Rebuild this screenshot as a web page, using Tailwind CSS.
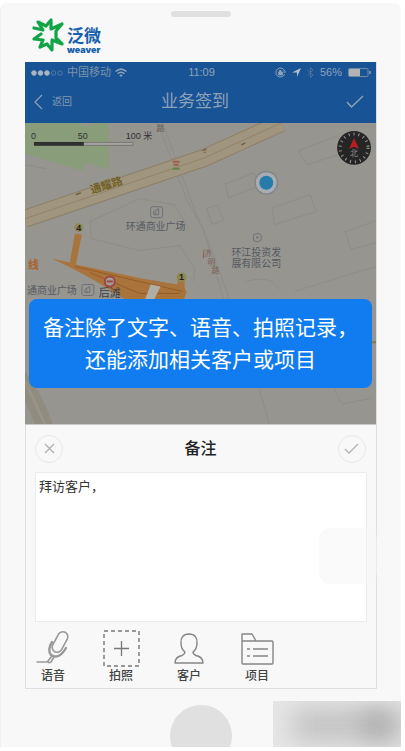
<!DOCTYPE html>
<html lang="zh-CN">
  <head>
    <meta charset="UTF-8" />
    <meta name="viewport" content="width=device-width, initial-scale=1.0" />
    <title>业务签到</title>
    <script src="https://cdn.jsdelivr.net/npm/@tailwindcss/browser@4"></script>
    <style>
      body {
        font-family: "Liberation Sans", "Noto Sans CJK SC", sans-serif;
      }
    </style>
  </head>
  <body class="bg-white pt-[3px] pr-1 pb-1">
    <!-- phone body -->
    <div class="relative overflow-hidden rounded-t-lg border-l border-[#f0f0f0] bg-[#f8f8f8]">
      <div class="mx-auto mt-2 h-[6px] w-15 rounded-full bg-[#e0e0e0]"></div>

      <!-- logo -->
      <div class="flex h-[45px] items-start pl-[30px]">
        <svg class="mt-px h-[34px] w-[34px] shrink-0" viewBox="0 0 34 34" fill="none" stroke="#12a548" stroke-width="3.200" stroke-linejoin="round" stroke-linecap="round">
          <path d="M3 10 12 12 7 4 15 8 20 2V11L31 6 25 13V20L31 26 21 22V32L16 26 9 29 12 22 3 21 10 16" />
        </svg>
        <div class="flex flex-col pt-[11px] pl-[2px] text-[#1760ad]">
          <span class="text-[17px] leading-[18px] font-bold">泛微</span>
          <span class="font-[Inter] text-[9px] leading-[8px] font-black">weaver</span>
        </div>
      </div>

      <!-- screen -->
      <main class="mr-6 ml-6 border-r border-b border-l border-[#dedede]">
        <header class="-ml-px bg-[#185495] text-[#8da2b8]">
          <div class="grid h-[21px] grid-cols-3 items-center pr-1 pl-[6px] text-[11px]">
            <div class="flex items-center gap-1 whitespace-nowrap">
              <svg class="h-2 w-8 shrink-0" viewBox="0 0 32 8" fill="#a9b5c0" stroke="#a9b5c0">
                <circle cx="3" cy="4" r="2.3" /><circle cx="9.500" cy="4" r="2.3" /><circle cx="16" cy="4" r="2.3" />
                <g fill="none" opacity=".4"><circle cx="22.500" cy="4" r="2.200" /><circle cx="29" cy="4" r="2.200" /></g>
              </svg>
              <span class="text-[#7d93aa]">中国移动</span>
              <svg class="h-[10px] w-3 shrink-0" viewBox="0 0 12 10" fill="none" stroke="currentColor" stroke-width="1.600">
                <path d="M.6 3.500Q6-1.200 11.400 3.500M2.600 5.700Q6 2.800 9.400 5.700" /><path d="M4.300 7.200Q6 5.800 7.700 7.200L6 9Z" fill="currentColor" stroke="none" />
              </svg>
            </div>
            <span class="text-center">11:09</span>
            <div class="flex items-center justify-end gap-[6px]">
              <svg class="h-[11px] w-[11px] shrink-0" viewBox="0 0 11 11" fill="none" stroke="currentColor">
                <path d="M9.600 7A4.500 4.500 0 1 1 9.600 4M8 5h3" /><path d="M3.500 5h4v3h-4zM4.200 5V3.500h2V5" fill="currentColor" stroke-width=".7" />
              </svg>
              <svg class="h-[9px] w-[9px] shrink-0" viewBox="0 0 9 9" fill="#b4bfca"><path d="M9 0 5 9V4.500H0Z" /></svg>
              <svg class="h-[11px] w-[7px] shrink-0" viewBox="0 0 7 11" fill="none" stroke="#507299"><path d="M.5 3 6 8 3.500 10.500V.5L6 3 .5 8" /></svg>
              <span>56%</span>
              <svg class="h-[9px] w-6 shrink-0" viewBox="0 0 24 9">
                <rect x=".5" y=".5" width="19.500" height="8" rx="1" fill="none" stroke="#6f8aa6" /><path d="M1 1h11v7H1z" fill="#b0b3b2" /><path d="M22 3v3" stroke="currentColor" stroke-width="1.500" />
              </svg>
            </div>
          </div>
          <div class="grid h-10 grid-cols-3 items-center pr-3 pl-[9px] pb-[3px]">
            <button class="flex items-center gap-[9px] text-[10px] text-[#8198ae]">
              <svg class="h-4 w-[9px]" viewBox="0 0 9 16" fill="none" stroke="#8da2b8" stroke-width="1.200"><path d="M8 1 1 8 8 15" /></svg>
              返回
            </button>
            <h1 class="pr-2 text-center text-[17px] whitespace-nowrap">业务签到</h1>
            <button class="justify-self-end" aria-label="完成">
              <svg class="h-[13px] w-[18px]" viewBox="0 0 18 13" fill="none" stroke="currentColor" stroke-width="1.400"><path d="M1 7 5.500 12 17 1" /></svg>
            </button>
          </div>
        </header>

        <!-- map -->
        <section class="relative -ml-px h-[302px] border-b border-[#c8c8c6] bg-[#969590]">
          <svg class="h-full w-full" viewBox="25 123 352 302" preserveAspectRatio="xMidYMid slice">
            <path d="M25 123H109V170L86 163 83 171 25 154Z" fill="#8a9d7b" />
            <path d="M83 123h13l-13 4z" fill="#969590" />
            <!-- buildings -->
            <g fill="none" stroke="#8e8d89" stroke-width="1">
              <path d="M299 151 338 136 347 152 308 165ZM226 184 255 173 260 186 229 198ZM273 208 311 195 317 212 275 225ZM346 232 377 221M346 232 352 250 377 243M207 209 218 205 224 221 213 225ZM90 222 140 199 175 205 190 230M90 222 92 239 140 251 180 246 195 269 194 282M246 282Q273 275 280 290M295 292 377 267M25 165 47 169M257 380 270 425M335 390l8 15 30-6" />
              <path d="M158 123 188 202 204 230 224 299M163 123 195 210 208 240 230 299" />
            </g>
            <!-- main road -->
            <path d="M25 219 205 158 282 123" fill="none" stroke="#8f7f68" stroke-width="18" />
            <path d="M25 219 205 158 282 123" fill="none" stroke="#a0957f" stroke-width="16" />
            <path d="M25 219 205 158 282 123" fill="none" stroke="#94836a" stroke-width="1" />
            <path d="m76 195 5-2M203 151l4-2M242 145l4-2" fill="none" stroke="#6f6348" stroke-width="1.500" />
            <path d="M25 372Q42 394 53 425H35L25 402Z" fill="#908c80" />
            <path d="M25 382 45 425" fill="none" stroke="#989488" stroke-width="3" />
            <!-- metro line -->
            <g fill="#a9733c">
              <path d="M52 259 70 263 75 234 82 235 76 265 142 279 178 285V276h7v12l2 5-4 10H130Q95 279 52 259Z" />
            </g>
            <path d="M75 267 183 292M90 273l50 21h40" fill="none" stroke="#965b26" stroke-width="1" />
            <path d="m151 285 10 2-7 14h-9z" fill="#b1aea6" />
            <g font-weight="bold" font-size="9" text-anchor="middle" fill="#222">
              <circle cx="79" cy="228" r="4.500" fill="#918952" /><text x="79" y="231">4</text>
              <circle cx="182" cy="278" r="5" fill="#918952" /><text x="182" y="281">1</text>
            </g>
            <circle cx="110" cy="282" r="5" fill="#a79d98" stroke="#9b4646" stroke-width="2" />
            <path d="M107 282h6" stroke="#9b4646" stroke-width="2" />
            <path d="M173 162h7M174 165h5" stroke="#a15e50" stroke-width="2" /><path d="M173 169h7" stroke="#66834b" stroke-width="2" />
            <path d="M204 153l3-1M204 251v8" stroke="#94635a" stroke-width="1" />
            <path d="M373 343h4" stroke="#8e7440" stroke-width="2" />
            <!-- place names -->
            <g fill="#555960" font-size="10">
              <text x="126" y="230">环通商业广场</text>
              <text x="27" y="295">通商业广场</text>
              <text x="232" y="256">环江投资发</text>
              <text x="232" y="267">展有限公司</text>
            </g>
            <text x="99" y="298" fill="#3f4043" font-size="11">后滩</text>
            <text x="28" y="269" fill="#a9612b" font-size="11" font-weight="bold">线</text>
            <text transform="rotate(-17 92 194)" x="92" y="194" fill="#716124" font-size="11" font-weight="bold">通耀路</text>
            <g fill="#7b6557" font-size="8"><text x="204" y="256">济</text><text x="208" y="265">明</text><text x="212" y="274">路</text></g>
            <text x="157" y="131" fill="#6a5d52" font-size="8">路</text>
            <g fill="none" stroke="#6d7078">
              <rect x="151" y="207" width="12" height="11" rx="2" /><path d="M154 215v-3l5-3v6zM156 215v-3" />
              <rect x="82" y="285" width="12" height="11" rx="2" /><path d="M85 293v-3l5-3v6zM87 293v-3" />
              <rect x="254" y="234" width="8" height="8" rx="3" /><path d="M257 238h2" stroke-width="2" />
            </g>
            <!-- scale -->
            <g fill="#303030" font-size="9">
              <text x="31" y="139">0</text><text x="78" y="139">50</text><text x="126" y="139">100 米</text>
            </g>
            <path d="M34.500 142.500h99v3h-99z" fill="#a5a39f" stroke="#777872" /><path d="M34 142h50v4H34z" fill="#2d302c" />
            <!-- position -->
            <circle cx="267" cy="183" r="12" fill="#858587" /><circle cx="267" cy="183" r="10.500" fill="#a8acb3" /><circle cx="267" cy="183" r="7" fill="#277bab" />
            <!-- compass -->
            <circle cx="355" cy="148" r="17" fill="#252525" />
            <circle cx="355" cy="148" r="14" fill="none" stroke="#999" stroke-width="3" stroke-dasharray="1 4" />
            <path d="m355 138 5 11-5-2-5 2z" fill="#b51f20" />
            <text x="355" y="156" fill="#929292" font-size="8" text-anchor="middle">北</text>
          </svg>
          <div class="absolute inset-x-1 top-[176px] flex h-[89px] flex-col justify-center rounded-lg bg-[#107cf0] text-center text-[21px] leading-8 whitespace-nowrap text-white">
            <p>备注除了文字、语音、拍照记录，</p>
            <p>还能添加相关客户或项目</p>
          </div>
        </section>

        <!-- note form -->
        <form class="px-[9px]">
          <div class="flex h-[47px] items-center justify-between pr-px">
            <button type="button" aria-label="取消" class="flex size-7 items-center justify-center rounded-full border border-[#e8e8e8]">
              <svg class="size-[11px]" viewBox="0 0 11 11" stroke="#b0b0b0" stroke-width="1.300"><path d="m1 1 9 9M10 1 1 10" /></svg>
            </button>
            <label for="note" class="text-[16px] font-medium text-[#222]">备注</label>
            <button type="button" aria-label="保存" class="flex size-7 items-center justify-center rounded-full border border-[#e8e8e8]">
              <svg class="h-[11px] w-[15px]" viewBox="0 0 15 11" fill="none" stroke="#bbb" stroke-width="1.600"><path d="M1 6 5 10 14 1" /></svg>
            </button>
          </div>
          <textarea id="note" class="block h-[150px] w-full resize-none border border-[#ebebeb] bg-white px-[3px] py-1 text-[13px] leading-5 text-[#333] outline-none">拜访客户，</textarea>
          <div class="flex gap-8 pt-2 pb-1 text-[12px] leading-[15px] font-medium text-[#444]">
            <button type="button" class="flex w-9 flex-col items-center gap-[2px]">
              <svg class="h-[37px] w-9" viewBox="0 0 36 37" fill="none" stroke="#999" stroke-width="1.600" stroke-linecap="round">
                <rect x="20" y="1" width="10" height="22" rx="5" transform="rotate(28 25 12)" />
                <path d="M17 12Q12 20 16 25 24 30 31 18" stroke-width="2.400" /><path d="M17 26 13 31Q14 34 16 32L19 27M2 32h11" />
              </svg>
              语音
            </button>
            <button type="button" class="flex w-9 flex-col items-center gap-[2px]">
              <svg class="h-[37px] w-[37px]" viewBox="0 0 37 37" fill="none" stroke="#777">
                <rect x="1" y="1" width="35" height="35" stroke-width="1.400" stroke-dasharray="4 3" /><path d="M18.500 11v15M11 18.500h15" stroke-width="1.300" />
              </svg>
              拍照
            </button>
            <button type="button" class="flex w-9 flex-col items-center gap-[2px]">
              <svg class="h-[37px] w-[30px]" viewBox="0 0 30 37" fill="none" stroke="#858585" stroke-width="1.400" stroke-linejoin="round">
                <path d="M15 4C9 4 6.500 8 7 13Q7 19 11 22 11 24 8 25.500 1 27 1 33H29Q29 27 22 25.500 19 24 19 22 23 19 23 13C23.500 8 21 4 15 4Z" />
              </svg>
              客户
            </button>
            <button type="button" class="flex w-9 flex-col items-center gap-[2px]">
              <svg class="h-[37px] w-[33px]" viewBox="0 0 33 37" fill="none" stroke="#858585" stroke-width="1.400" stroke-linejoin="round">
                <path d="M1 11V4H11L15 11M1 11H31Q32 11 32 12V33Q32 34 31 34H2Q1 34 1 33Z" /><path d="M6 19h3M6 26h3M12 19h15M12 26h15" />
              </svg>
              项目
            </button>
          </div>
        </form>
      </main>

      <!-- home button -->
      <footer class="h-[58px] overflow-hidden pt-4">
        <div class="mx-auto size-[62px] rounded-full bg-[#e0e0e0]"></div>
      </footer>
      <div class="absolute right-0 bottom-0 h-[46px] w-32 overflow-hidden bg-[#e6e6e6]">
        <div class="mt-2 ml-5 h-8 w-28 bg-[#c2c2c2] blur-md"></div>
        <div class="absolute top-3 right-3 size-6 bg-[#a5a5a5] blur-md"></div>
      </div>
      <!-- floating touch button -->
      <div class="absolute right-6 bottom-[163px] h-14 w-[58px] rounded-xl bg-[#f6f6f6]/50"></div>
    </div>
  </body>
</html>
